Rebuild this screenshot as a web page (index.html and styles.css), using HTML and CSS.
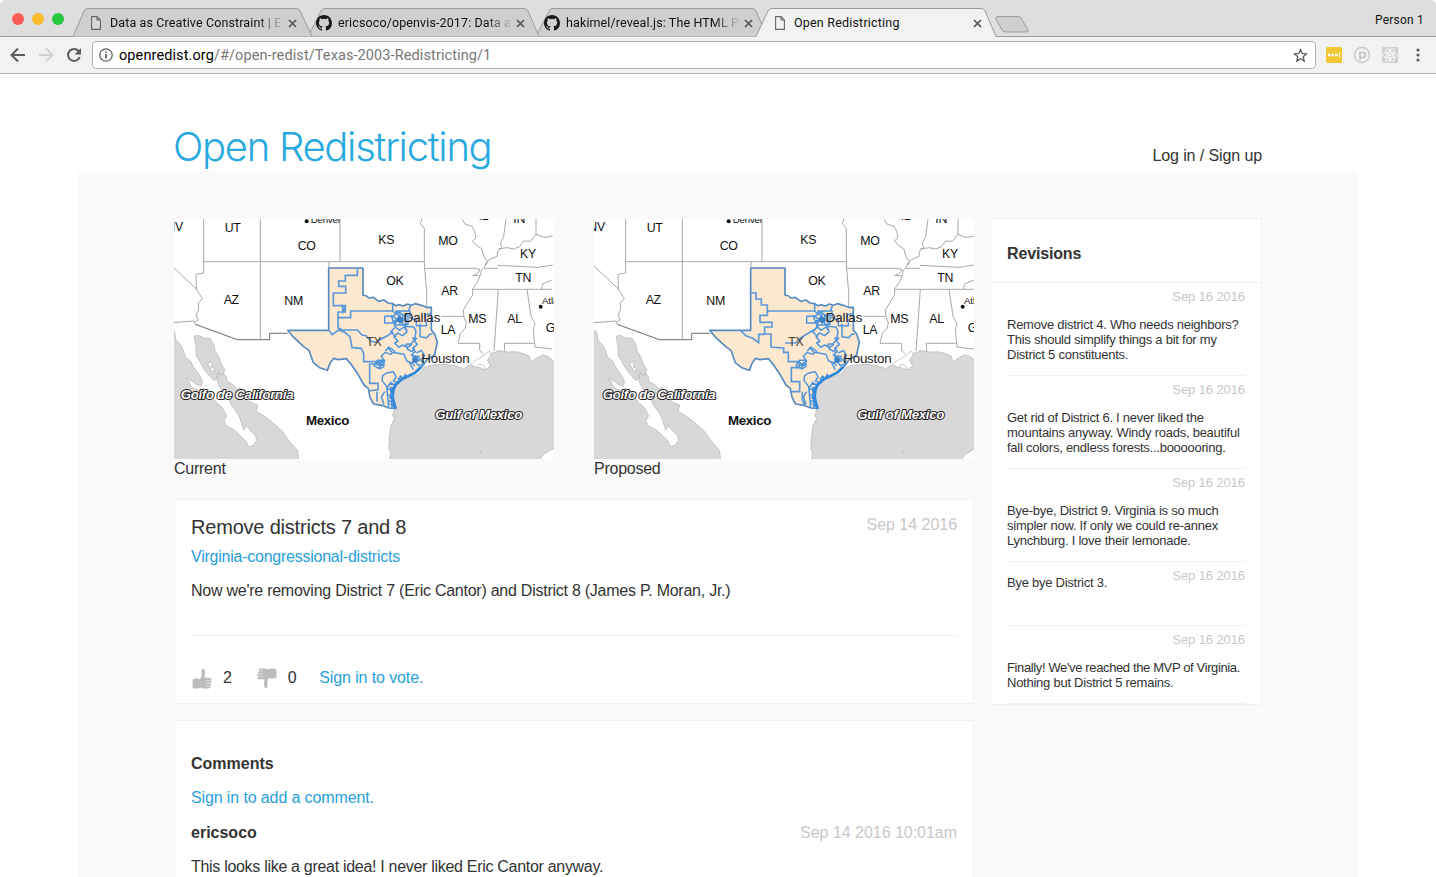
FILE: index.html
```html
<!DOCTYPE html>
<html lang="en">
<head>
<meta charset="utf-8">
<title>Open Redistricting</title>
<link rel="stylesheet" href="styles.css">
</head>
<body>
<svg class="defs" width="0" height="0" aria-hidden="true">
  <defs>
    <symbol id="doc" viewBox="0 0 10 14"><path d="M.6.6H6L9.4 4V13.4H.6ZM6 .6V4H9.4" fill="#fff" fill-opacity=".2" stroke="#666" stroke-width="1.1"/></symbol>
    <symbol id="close" viewBox="0 0 9 9"><path d="M1 1L8 8M8 1L1 8" stroke="#555" stroke-width="1.7"/></symbol>
    <symbol id="github" viewBox="0 0 16 16"><path fill="#191717" d="M8 0C3.58 0 0 3.58 0 8c0 3.54 2.29 6.53 5.47 7.59.4.07.55-.17.55-.38 0-.19-.01-.82-.01-1.49-2.01.37-2.53-.49-2.69-.94-.09-.23-.48-.94-.82-1.13-.28-.15-.68-.52-.01-.53.63-.01 1.08.58 1.23.82.72 1.21 1.87.87 2.33.66.07-.52.28-.87.51-1.07-1.78-.2-3.64-.89-3.64-3.95 0-.87.31-1.59.82-2.15-.08-.2-.36-1.02.08-2.12 0 0 .67-.21 2.2.82a7.6 7.6 0 0 1 4 0c1.53-1.04 2.2-.82 2.2-.82.44 1.1.16 1.92.08 2.12.51.56.82 1.27.82 2.15 0 3.07-1.87 3.75-3.65 3.95.29.25.54.73.54 1.48 0 1.07-.01 1.93-.01 2.2 0 .21.15.46.55.38A8.01 8.01 0 0 0 16 8c0-4.42-3.58-8-8-8z"/></symbol>
    <symbol id="thumb" viewBox="0 0 20 21"><g fill="#bdbdbd"><rect x=".5" y="10.5" width="8" height="10" rx="2.500"/><path d="M7.600 19V11.500C9.500 10 9.500 7.500 9.500 4.500C9.300 1.200 10 .5 11 .7C12.700 1 13.200 3.500 12.900 5.500L12.600 9.700H17.500C19.700 9.700 20 12 18.700 12.600C20 13.200 19.800 15 18.500 15.400C19.500 16 19 17.700 18 18C18.800 19 17.800 20.500 16.500 20.500H11C9.500 20.500 9 19.600 7.600 19Z"/></g><path d="M14 12.800h5M14 15.500h5M14 18.100h4.500" stroke="#fff" stroke-width=".5"/></symbol>
    <symbol id="basemap" viewBox="0 0 1164 732" overflow="visible">
      <rect width="1164" height="740" fill="#fff"/>
      <g fill="#d8d8d8" stroke="#a0a0a0" stroke-width="1.500">
        <path d="M8 340L20 352L24 375L40 392L48 412L54 428L68 438L76 455L88 471L98 486L104 502L98 514L84 508L66 494L54 490L64 500L68 512L80 522L94 526L108 520L122 536L136 550L148 566L162 576L176 602L168 617L175 632L200 646L216 661L236 680L240 694L254 692L265 677L263 662L246 646L236 632L227 645L222 630L214 605L204 588L192 574L184 555L174 545L160 525L148 501L146 482L152 474L164 474L175 484L176 497L197 511L208 524L214 517L221 523L224 545L246 561L270 571L264 588L287 602L306 616L329 636L346 652L365 680L389 706L392 740H0V340Z"/>
        <path d="M78 364L90 361L108 369L126 370L138 389L140 406L152 424L160 448L170 462L167 478L157 479L150 470L146 492L138 497L120 478L109 464L98 444L84 420L84 397Z"/>
        <path d="M680 583L674 601L680 611L668 633L664 670L662 700L668 714L663 740H1170V428L1156 438L1142 425L1124 419L1108 428L1088 440L1084 423L1062 414L1042 410L1018 411L990 406L982 412L950 420L944 437L964 445L966 454L952 464L928 456L902 451L888 461L862 452L828 448L790 450L770 456L752 478L708 492L684 509L676 535Z"/>
      </g>
      <g fill="#fff" stroke="#999" stroke-width="1.500">
        <path d="M119 447l8-7 5 8-2 8 8 4 2 10-9-2-6-12zM940 426l24-18 6 12-12 16 10 16-15 13-6-14-14-4-8 11-18-9 12-10zM1116 732l10-14 24-14 16-6V740h-50z"/>
        <path d="M933 708l6 2 3 6" fill="none"/>
      </g>
      <g fill="none" stroke="#969696" stroke-width="2.500">
        <path d="M107 10V174L84 178L85 222L103 251L91 264L92 284L84 300L91 315L82 320M12 153L85 222M12 323L78 318L82 328L208 374H305V355H359M107 140H769M277 10V374M516 10V140M483 140V345M769 140V40L757 26L762 12M769 140L770 160H923L936 164L929 175L914 182L936 182M770 160L776 232V280M820 304H886M914 223H1152M882 12L892 28L911 33L920 49L924 69L914 77L926 92L941 101L948 125L957 139L948 158L941 165L936 184L928 202L914 222L914 240L897 267L886 285L888 307L895 323L892 340L877 355L870 385H935V405L944 416M1014 12L1007 65L997 85L1001 97L989 109L987 124L962 135L953 151M990 102L1017 98L1037 102L1055 95L1066 78L1087 79L1104 58L1128 67L1154 64M1104 12V60M990 151L1110 157L1154 150M948 160H990M991 223L978 408M1077 223L1089 304L1101 326L1096 344L1098 368L1101 396L1152 402M1010 408L1009 385H1097M1120 222L1125 206L1152 195"/>
        <path d="M82 328L208 374H305V355H359" stroke="#777"/>
      </g>
      <g fill="#111"><circle cx="416" cy="19" r="6"/><circle cx="1118" cy="275" r="6"/></g>
    </symbol>
    <symbol id="texas" viewBox="0 0 1164 732" overflow="visible">
      <path fill="#fee8d0" stroke="#568bc0" stroke-width="5" stroke-linejoin="round" d="M482 159H585V240L596 243L602 249L616 247L632 259L648 255L660 264L674 266L684 272L692 269L706 273L718 267L730 271L742 266L760 271L775 277H790V345L800 357L808 382L803 404L800 420L777 434L764 453L748 470L724 483L699 494L684 508L676 526L673 548L684 580L662 579L642 571L617 567L606 547L601 520L588 510L570 478L548 446L535 431L510 434L497 430L487 443L478 466L455 458L436 443L423 406L407 395L374 364L359 346H482Z"/>
    </symbol>
    <symbol id="metro" viewBox="0 0 1164 732" overflow="visible">
      <g fill="none" stroke="#4f95dc" stroke-width="4.500" stroke-linejoin="round">
        <path d="M674 266V288L684 298L673 304H650V324H674L686 316L680 334L694 346L708 336L718 350M682 288H722L727 272M726 286V308L745 314V332H776L771 300L790 295M684 290L693 304L684 316L700 322L712 306L700 296ZM680 316h34v14h-34zM696 290v42M704 300h16v28h-16zM670 302l20 12-12 12zM718 350L704 362L688 354L678 366L690 378L680 384L692 397L704 390L718 398L732 388M718 350L710 334L738 336L744 350L740 372L730 386L714 388L718 402L732 410L740 400M756 326V365L776 368L785 358L794 358M732 370H746L739 378L748 388L734 400L742 410L730 420L748 425L738 436L748 448M745 414L760 406L770 422L758 434L768 446L752 452L740 438L726 446L736 464M735 424h18v14h-18zM684 366L668 350L680 338"/>
        <path d="M652 408L662 396L680 408L668 418L652 412L640 424L650 438L634 448L626 438L618 452L632 460L644 446M660 398L672 412L708 418L716 438L732 444L740 452M628 436h20v14h-20zM636 446l12 8-12 8z"/>
        <path d="M644 482L656 474L676 470L684 486L676 498L692 504L678 510L668 502L658 518L642 496ZM664 508H678V522H658V540H672V558H662V574M650 530L640 546L648 568M668 514L672 580M656 514L662 578"/>
      </g>
      <path d="M760 455L740 474L702 492L684 508L676 524L674 548L682 580" fill="none" stroke="#2f87dc" stroke-width="8"/>
      <path d="M690 494l8-10 6 8 8-12 4 8M676 516l-8 10 6 10-8 12 8 6-4 14 8 6" fill="none" stroke="#398adb" stroke-width="5"/>
      <g fill="#3b80c4"><circle cx="696" cy="314" r="9"/><circle cx="742" cy="434" r="8"/></g>
    </symbol>
  </defs>
</svg>

<div class="browser">
  <div class="tabstrip">
    <div class="lights"><i class="red"></i><i class="amber"></i><i class="green"></i></div>
    <svg class="tab-shapes" width="970" height="37" viewBox="0 0 970 37">
      <path d="M0 36.500H970" stroke="#9b9b9b"/>
      <g fill="#cfcfcf" stroke="#9b9b9b">
        <path d="M463 36.500L476 11Q477 8.500 480 8.500H679Q682 8.500 683 11L694 36.500"/>
        <path d="M235 36.500L248 11Q249 8.500 252 8.500H451Q454 8.500 455 11L466 36.500"/>
        <path d="M0 36.500L11 11Q12 8.500 15 8.500H223Q226 8.500 227 11L239 36.500"/>
        <path d="M926 16.500H945Q947 16.500 948 18L955 30Q956 32 953 32H933Q930 32 929 30L923 19Q922 16.500 926 16.500Z"/>
      </g>
      <path fill="#f2f2f2" d="M683 37L695 11Q696 8.500 699 8.500H908Q911 8.500 912 11L923 37"/>
      <path fill="none" stroke="#9b9b9b" d="M683 36.500L695 11Q696 8.500 699 8.500H908Q911 8.500 912 11L923 36.500"/>
    </svg>
    <div class="tabs">
      <div class="tab"><svg class="favicon doc"><use href="#doc"/></svg><span class="fade">Data as Creative Constraint | E</span><svg class="x"><use href="#close"/></svg></div>
      <div class="tab"><svg class="favicon"><use href="#github"/></svg><span class="fade">ericsoco/openvis-2017: Data a</span><svg class="x"><use href="#close"/></svg></div>
      <div class="tab"><svg class="favicon"><use href="#github"/></svg><span class="fade">hakimel/reveal.js: The HTML Pr</span><svg class="x"><use href="#close"/></svg></div>
      <div class="tab active"><svg class="favicon doc"><use href="#doc"/></svg><span>Open Redistricting</span><svg class="x"><use href="#close"/></svg></div>
    </div>
    <span class="person">Person 1</span>
  </div>
  <div class="toolbar">
    <svg class="nav" width="92" height="36" viewBox="0 0 92 36" fill="none" stroke-width="2">
      <path d="M25 18H12M18 11.500L11.500 18L18 24.500" stroke="#5c5c5c"/>
      <path d="M39 18H52M46 11.500L52.500 18L46 24.500" stroke="#d2d2d2"/>
      <path d="M79 14.500A6 6 0 1 0 79.700 20" stroke="#5c5c5c"/><path d="M81 11V17.500H74.500Z" fill="#5c5c5c"/>
    </svg>
    <div class="address">
      <svg width="14" height="14" viewBox="0 0 14 14"><circle cx="7" cy="7" r="6.200" fill="none" stroke="#5f5f5f" stroke-width="1.300"/><path d="M7 6V10.500M7 3.400V5" stroke="#5f5f5f" stroke-width="1.700"/></svg>
      <span class="url"><b>openredist.org</b>/#/open-redist/Texas-2003-Redistricting/1</span>
      <svg class="star" width="15" height="15" viewBox="0 0 15 15"><path d="M7.500 1.600L9.200 5.500L13.500 5.900L10.200 8.700L11.200 13L7.500 10.700L3.800 13L4.800 8.700L1.500 5.900L5.800 5.500Z" fill="none" stroke="#5c5c5c" stroke-width="1.300"/></svg>
    </div>
    <svg class="extensions" width="120" height="36" viewBox="0 0 120 36">
      <rect x="10" y="10" width="16" height="16" rx="1.500" fill="#f4c734"/><path d="M12 18h2.500M15.500 18H18M19 18h2.500" stroke="#fff" stroke-width="2.500"/><path d="M23.500 15.500v5" stroke="#fff"/>
      <circle cx="46" cy="18" r="7.500" fill="none" stroke="#c9c9c9" stroke-width="1.300"/><path d="M44 23V15.500H46.800A2.500 2.500 0 0 1 46.800 20.500H44" fill="none" stroke="#c4c4c4" stroke-width="1.600"/>
      <rect x="66" y="10" width="16" height="16" rx="1" fill="#d0d0d0"/><g fill="none" stroke="#f7f7f7" stroke-width="1"><ellipse cx="74" cy="18" rx="7" ry="2.800"/><ellipse cx="74" cy="18" rx="7" ry="2.800" transform="rotate(60 74 18)"/><ellipse cx="74" cy="18" rx="7" ry="2.800" transform="rotate(120 74 18)"/></g><circle cx="74" cy="18" r="1.400" fill="#fff"/>
      <g fill="#5c5c5c"><circle cx="102" cy="13" r="1.600"/><circle cx="102" cy="18" r="1.600"/><circle cx="102" cy="23" r="1.600"/></g>
    </svg>
  </div>
</div>

<header class="masthead">
  <h1>Open Redistricting</h1>
  <span class="login">Log in / Sign up</span>
</header>

<main class="page">
  <div class="left">
    <div class="maps">
      <figure>
        <svg class="map" viewBox="18 12 1140 720">
          <use href="#basemap" width="1164" height="732"/>
          <use href="#texas" width="1164" height="732"/>
          <path class="district" d="M568 159V181H532V198H512V214H533V234H496V272H532V291H510V308H548V288H674M510 308V338L523 345H568L582 360L594 362L608 378L625 382L640 372L662 360L676 350M482 345L492 359L512 345L530 352L546 365L552 398L580 400L587 415V440H640L648 434M640 440L625 447H605V505H630V524L602 528M627 530V560M523 272l8 6-6 12z"/>
          <use href="#metro" width="1164" height="732"/>
          <g class="labels">
            <text x="-5" y="48">NV</text><text x="170" y="50">UT</text><text x="389" y="104">CO</text><text x="631" y="87">KS</text><text x="811" y="91">MO</text><text x="1056" y="128">KY</text><text x="655" y="211">OK</text><text x="820" y="240">AR</text><text x="1042" y="200">TN</text><text x="167" y="266">AZ</text><text x="349" y="269">NM</text><text x="901" y="323">MS</text><text x="1018" y="323">AL</text><text x="818" y="357">LA</text><text x="1133" y="350">G</text><text x="595" y="394" fill="#443c35">TX</text>
            <text x="932" y="16">IL</text><text x="1036" y="25">IN</text><text x="428" y="25" class="small" textLength="90">Denver</text><text x="1122" y="266" class="small" textLength="88">Atlanta</text>
            <text x="707" y="322" class="city" textLength="109">Dallas</text><text x="760" y="443" class="city" textLength="144">Houston</text>
            <text x="414" y="631" class="country" textLength="129">Mexico</text>
            <text x="38" y="551" class="water" textLength="338">Golfo de California</text><text x="802" y="612" class="water" textLength="260">Gulf of Mexico</text>
          </g>
        </svg>
        <figcaption>Current</figcaption>
      </figure>
      <figure>
        <svg class="map" viewBox="12 12 1140 720">
          <use href="#basemap" width="1164" height="732"/>
          <use href="#texas" width="1164" height="732"/>
          <path class="district" d="M482 234H498V252H514V270H532V288H676M532 288V301H510V322H546V336H524V357H543V396L581 399V412H595V440H628M450 345L468 362L488 370L506 383V358H524M585 384H618L628 372L652 356L676 342L686 330M628 440V458H604V500H629V530H603M637 530V555L645 571"/>
          <use href="#metro" width="1164" height="732"/>
          <g class="labels">
            <text x="-5" y="48">NV</text><text x="170" y="50">UT</text><text x="389" y="104">CO</text><text x="631" y="87">KS</text><text x="811" y="91">MO</text><text x="1056" y="128">KY</text><text x="655" y="211">OK</text><text x="820" y="240">AR</text><text x="1042" y="200">TN</text><text x="167" y="266">AZ</text><text x="349" y="269">NM</text><text x="901" y="323">MS</text><text x="1018" y="323">AL</text><text x="818" y="357">LA</text><text x="1133" y="350">G</text><text x="595" y="394" fill="#443c35">TX</text>
            <text x="932" y="16">IL</text><text x="1036" y="25">IN</text><text x="428" y="25" class="small" textLength="90">Denver</text><text x="1122" y="266" class="small" textLength="88">Atlanta</text>
            <text x="707" y="322" class="city" textLength="109">Dallas</text><text x="760" y="443" class="city" textLength="144">Houston</text>
            <text x="414" y="631" class="country" textLength="129">Mexico</text>
            <text x="38" y="551" class="water" textLength="338">Golfo de California</text><text x="802" y="612" class="water" textLength="260">Gulf of Mexico</text>
          </g>
        </svg>
        <figcaption>Proposed</figcaption>
      </figure>
    </div>

    <section class="card proposal">
      <div class="row"><h2>Remove districts 7 and 8</h2><time>Sep 14 2016</time></div>
      <a class="ref">Virginia-congressional-districts</a>
      <p class="body">Now we're removing District 7 (Eric Cantor) and District 8 (James P. Moran, Jr.)</p>
      <div class="votes">
        <svg class="thumb"><use href="#thumb"/></svg><span class="count">2</span>
        <svg class="thumb down"><use href="#thumb"/></svg><span class="count">0</span>
        <a class="vote">Sign in to vote.</a>
      </div>
    </section>

    <section class="card comments">
      <h3>Comments</h3>
      <a class="add">Sign in to add a comment.</a>
      <div class="row"><h4>ericsoco</h4><time class="stamp">Sep 14 2016 10:01am</time></div>
      <p class="remark">This looks like a great idea! I never liked Eric Cantor anyway.</p>
    </section>
  </div>

  <aside class="card revisions">
    <h3>Revisions</h3>
    <ul>
      <li><time>Sep 16 2016</time><p>Remove district 4. Who needs neighbors?<br>This should simplify things a bit for my<br>District 5 constituents.</p></li>
      <li><time>Sep 16 2016</time><p>Get rid of District 6. I never liked the<br>mountains anyway. Windy roads, beautiful<br>fall colors, endless forests...boooooring.</p></li>
      <li><time>Sep 16 2016</time><p>Bye-bye, District 9. Virginia is so much<br>simpler now. If only we could re-annex<br>Lynchburg. I love their lemonade.</p></li>
      <li class="short"><time>Sep 16 2016</time><p>Bye bye District 3.</p></li>
      <li><time>Sep 16 2016</time><p><span class="tight">Finally! We've reached the MVP of Virginia.</span><br>Nothing but District 5 remains.</p></li>
    </ul>
  </aside>
</main>
</body>
</html>
```

FILE: styles.css
```css
* { box-sizing: border-box; }
html, body { height: 877px; overflow: hidden; }
body { margin: 0; background: #fff; color: #333; font: 16px/20px "Liberation Sans", Arial, sans-serif; letter-spacing: -0.25px; }
h1, h2, h3, h4, p, ul, figure { margin: 0; padding: 0; }
ul { list-style: none; }
svg { display: block; flex: none; }
.defs { position: absolute; }

/* Browser chrome */
.browser { height: 74px; font-family: Roboto, sans-serif; letter-spacing: 0; color: #111; }
.tabstrip { position: relative; height: 37px; display: flex; background: #dedede; border-bottom: 1px solid #9b9b9b; border-radius: 5px 5px 0 0; }
.tab-shapes { position: absolute; left: 73px; top: 0; }
.lights { display: flex; gap: 8px; padding: 13px 0 0 12px; width: 86px; }
.lights i { width: 12px; height: 12px; border-radius: 50%; }
.red { background: #fc5b57; }
.amber { background: #fdbb2e; }
.green { background: #28c840; }
.tabs { position: relative; display: flex; padding-top: 9px; height: 36px; }
.tab { display: flex; align-items: center; width: 228px; height: 28px; padding-left: 2px; font-size: 12.5px; white-space: nowrap; }
.tab span { width: 175px; overflow: hidden; letter-spacing: .12px; }
.tab .fade { -webkit-mask-image: linear-gradient(90deg, #000 84%, transparent); mask-image: linear-gradient(90deg, #000 84%, transparent); }
.favicon { width: 16px; height: 16px; margin-right: 6px; }
.favicon.doc { width: 10px; height: 14px; margin: 0 9px 0 3px; }
.x { width: 9px; height: 9px; margin-left: 3px; }
.active span { width: 176px; letter-spacing: .2px; }
.person { margin: 13px 12px 0 auto; font-size: 12px; line-height: 15px; letter-spacing: .2px; }
.toolbar { display: flex; height: 37px; background: #f2f2f2; border-bottom: 1px solid #b5b5b5; }
.address { display: flex; align-items: center; width: 1224px; height: 28px; margin-top: 4px; padding: 0 7px 0 6px; border: 1px solid #b0b0b0; border-radius: 4px; background: #fff; }
.url { margin-left: 6px; padding-top: 1px; flex: 1; color: #777; font-size: 14.5px; letter-spacing: .1px; }
.url b { color: #000; font-weight: 400; }

/* Page header */
.masthead { display: flex; justify-content: space-between; width: 1088px; height: 97px; margin-left: 174px; color: #333; }
.masthead h1 { margin: 49px 0 0 -1px; color: #28a9e0; font: 300 40px/48px Inter, sans-serif; letter-spacing: -1.3px; white-space: nowrap; }
.login { margin-top: 72px; letter-spacing: -.1px; }

/* Content */
.page { display: flex; align-items: flex-start; gap: 16px; width: 1280px; height: 706px; margin-left: 78px; padding: 47px 96px 0; background: #fafafa; }
.left { width: 800px; }
.maps { display: flex; gap: 40px; padding-top: 1px; height: 281px; }
.map { width: 380px; height: 240px; overflow: hidden; }
.district { fill: none; stroke: #5a98d6; stroke-width: 5; }
.labels { font: 37px "Liberation Sans", sans-serif; fill: #111; letter-spacing: -1px; }
.labels .small { font-size: 29px; }
.labels .city { font-size: 40px; fill: #222; }
.labels .country { font-size: 40px; font-weight: 700; }
.labels .water { font-size: 40px; font-style: italic; font-weight: 700; fill: #fff; stroke: #222; stroke-width: 6px; stroke-linejoin: round; paint-order: stroke; }
.card { background: #fff; border: 1px solid #f1f1f1; }
.row { display: flex; justify-content: space-between; }
time { color: #c8c8c8; letter-spacing: -.03px; }
a { display: block; color: #28a0da; letter-spacing: -.12px; }
.proposal { height: 205px; padding: 15px 16px 0; }
.proposal h2 { font-size: 20px; line-height: 24px; font-weight: 400; letter-spacing: -.2px; }
.ref { margin-top: 8px; letter-spacing: -.24px; }
.body { height: 55px; margin-top: 14px; border-bottom: 1px solid #f1f1f1; }
.votes { display: flex; align-items: center; height: 84px; }
.thumb { width: 20px; height: 21px; margin: 0 11px 0 1px; }
.down { margin-left: 25px; transform: rotate(180deg); }
.vote { margin-left: 23px; }
.comments { height: 200px; margin-top: 16px; padding: 33px 16px 0; }
.add { margin-top: 14px; }
h3, h4 { font-size: 16px; line-height: 20px; letter-spacing: 0; }
.comments .row { margin-top: 15px; }
.remark { margin-top: 14px; letter-spacing: -.3px; }
.revisions { width: 272px; height: 487px; font-size: 13px; line-height: 15px; }
.revisions h3 { height: 64px; padding: 25px 16px 0; border-bottom: 1px solid #f1f1f1; letter-spacing: -.15px; }
.revisions ul { padding: 0 16px; }
.revisions li { height: 93px; padding-top: 6px; border-bottom: 1px solid #f1f1f1; white-space: nowrap; }
.revisions li time { display: block; text-align: right; letter-spacing: -.1px; }
.revisions li p { margin-top: 13px; }
.revisions .short { height: 64px; }
.revisions .short p { margin-top: -8px; }
.revisions li:last-child { height: 78px; }
.tight { letter-spacing: -.37px; }
```
